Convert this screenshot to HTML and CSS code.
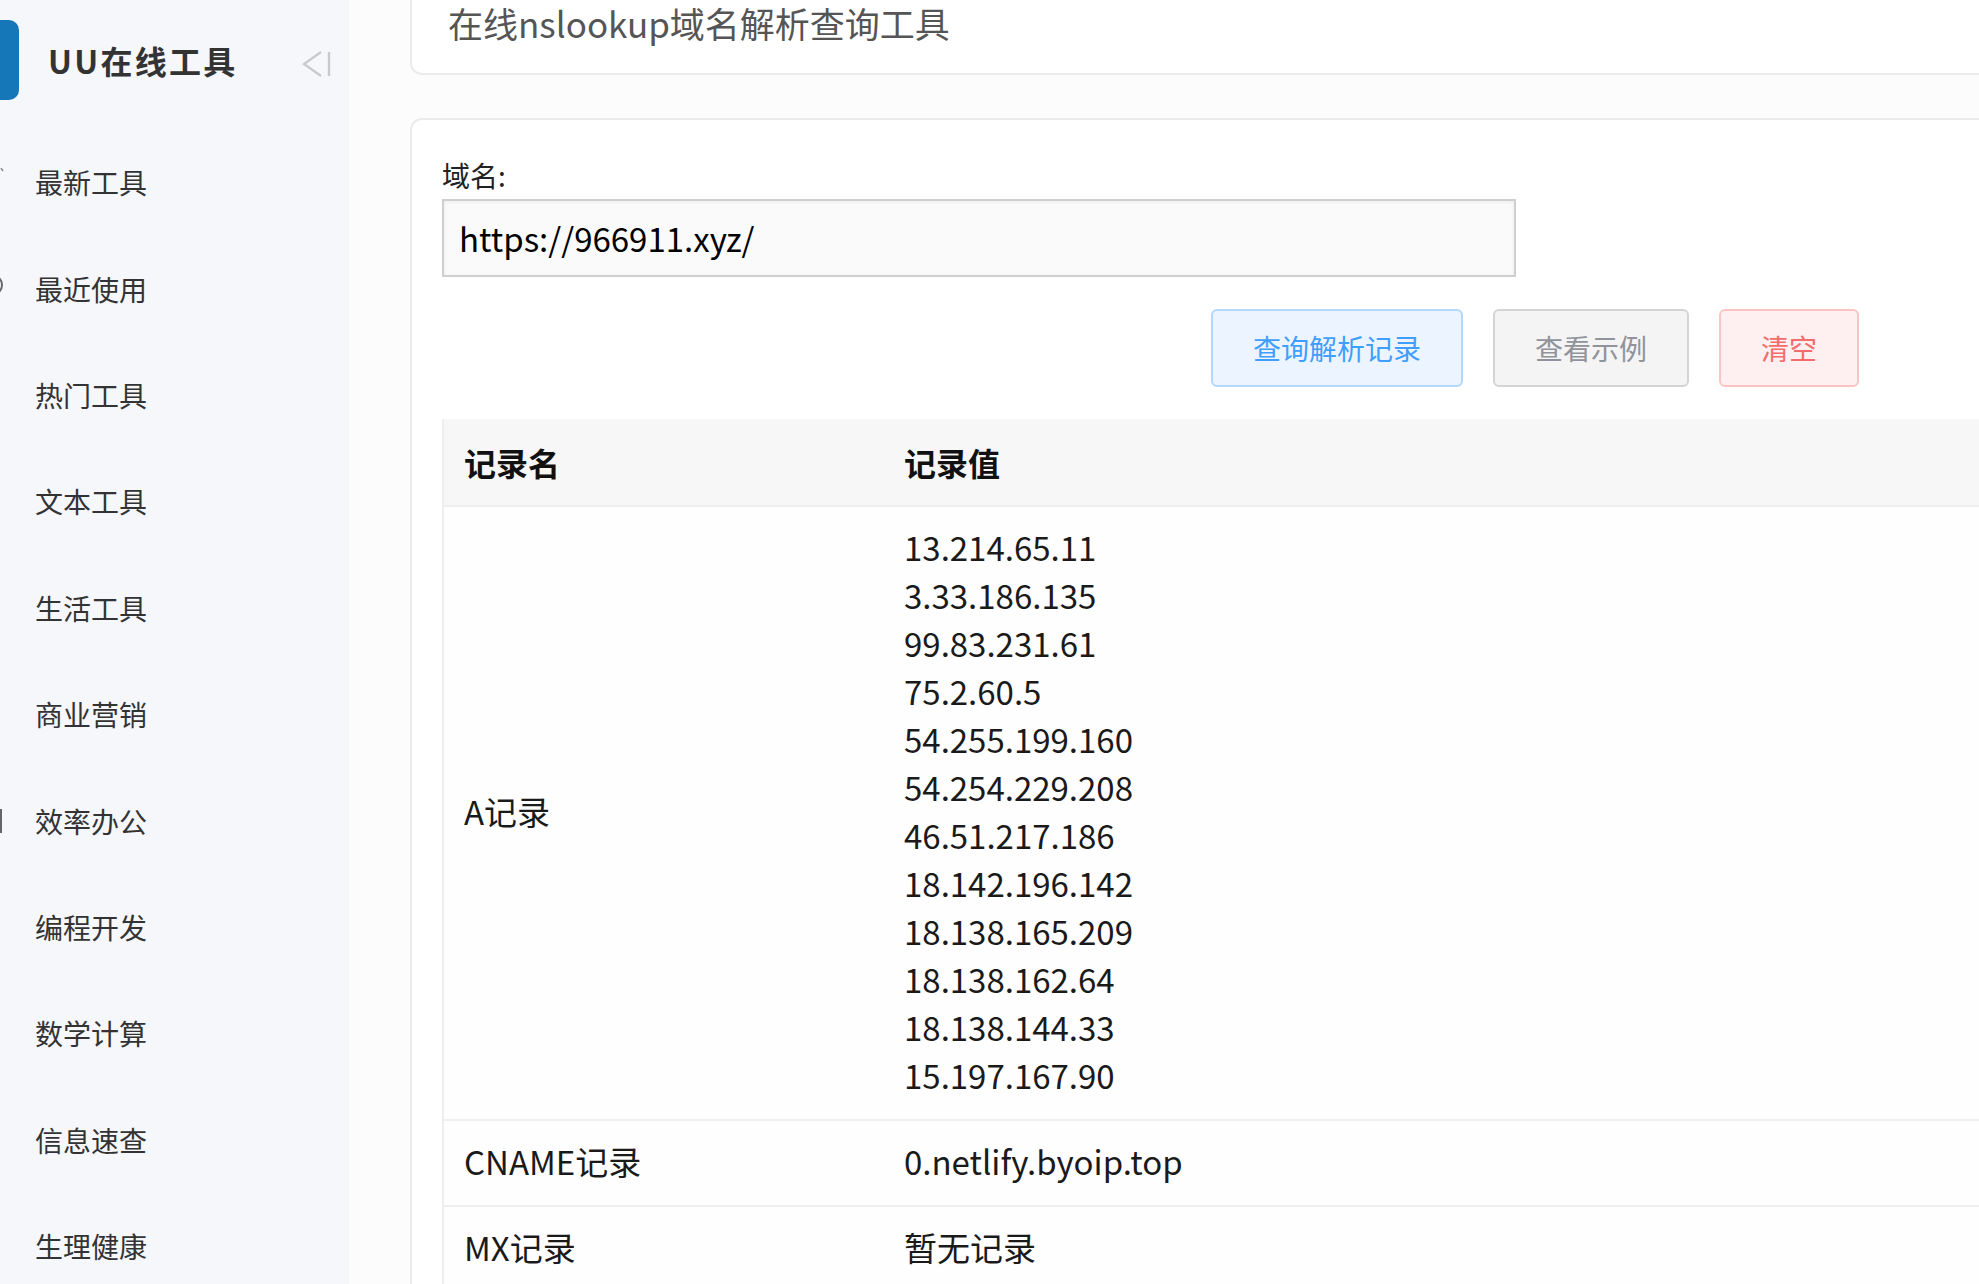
FILE: index.html
```html
<!DOCTYPE html>
<html lang="zh-CN">
<head>
<meta charset="utf-8">
<title>在线nslookup域名解析查询工具 - UU在线工具</title>
<link rel="stylesheet" href="styles.css">
</head>
<body>
<div class="app">
  <aside class="sidebar">
    <div class="brand">
      <span class="brand-mark"></span>
      <span class="brand-name">UU在线工具</span>
      <svg class="collapse" width="30" height="26" viewBox="0 0 30 26" aria-hidden="true">
        <polyline points="19,1 2,13 19,25" fill="none" stroke="#c9c9c9" stroke-width="2.2"/>
        <line x1="27" y1="1" x2="27" y2="25" stroke="#c9c9c9" stroke-width="2.4"/>
      </svg>
    </div>
    <nav class="menu">
      <a class="menu-item"><svg class="ico" width="4" height="28" viewBox="20 0 4 28"><line x1="21" y1="0" x2="23" y2="3" stroke="#888" stroke-width="1.5"/></svg>最新工具</a>
      <a class="menu-item"><svg class="ico" width="4" height="28" viewBox="20 0 4 28"><circle cx="12" cy="10" r="10" fill="none" stroke="#666" stroke-width="2"/></svg>最近使用</a>
      <a class="menu-item"><span class="ico-empty"></span>热门工具</a>
      <a class="menu-item"><span class="ico-empty"></span>文本工具</a>
      <a class="menu-item"><span class="ico-empty"></span>生活工具</a>
      <a class="menu-item"><span class="ico-empty"></span>商业营销</a>
      <a class="menu-item"><svg class="ico" width="4" height="28" viewBox="20 0 4 28"><line x1="21" y1="2" x2="21" y2="26" stroke="#666" stroke-width="2"/></svg>效率办公</a>
      <a class="menu-item"><span class="ico-empty"></span>编程开发</a>
      <a class="menu-item"><span class="ico-empty"></span>数学计算</a>
      <a class="menu-item"><span class="ico-empty"></span>信息速查</a>
      <a class="menu-item"><span class="ico-empty"></span>生理健康</a>
    </nav>
  </aside>

  <main class="main">
    <section class="card title-card">
      <h1 class="page-title">在线nslookup域名解析查询工具</h1>
    </section>

    <section class="card tool-card">
      <label class="field-label" for="domain">域名:</label>
      <input class="field-input" id="domain" type="text" value="https://966911.xyz/">

      <div class="actions">
        <button class="btn btn-primary" type="button">查询解析记录</button>
        <button class="btn btn-info" type="button">查看示例</button>
        <button class="btn btn-danger" type="button">清空</button>
      </div>

      <table class="result">
        <thead>
          <tr><th class="col-name">记录名</th><th>记录值</th></tr>
        </thead>
        <tbody>
          <tr>
            <td class="col-name">A记录</td>
            <td>
              <div>13.214.65.11</div>
              <div>3.33.186.135</div>
              <div>99.83.231.61</div>
              <div>75.2.60.5</div>
              <div>54.255.199.160</div>
              <div>54.254.229.208</div>
              <div>46.51.217.186</div>
              <div>18.142.196.142</div>
              <div>18.138.165.209</div>
              <div>18.138.162.64</div>
              <div>18.138.144.33</div>
              <div>15.197.167.90</div>
            </td>
          </tr>
          <tr>
            <td class="col-name">CNAME记录</td>
            <td>0.netlify.byoip.top</td>
          </tr>
          <tr>
            <td class="col-name">MX记录</td>
            <td>暂无记录</td>
          </tr>
        </tbody>
      </table>
    </section>
  </main>
</div>
</body>
</html>
```

FILE: styles.css
```css
* { box-sizing: border-box; }

html, body {
  margin: 0;
  padding: 0;
  height: 100%;
  overflow: hidden;
}

body {
  font-family: "Noto Sans CJK SC", "Noto Sans", sans-serif;
  color: #333;
  background: #fcfcfc;
}

.app {
  display: flex;
  height: 1284px;
  overflow: hidden;
}

/* ---------- sidebar ---------- */
.sidebar {
  flex: 0 0 349px;
  width: 349px;
  background: #f5f7fb;
  display: flex;
  flex-direction: column;
}

.brand {
  display: flex;
  align-items: center;
  height: 80px;
  margin-top: 20px;
  margin-bottom: 29px;
  padding-right: 17px;
}

.brand-mark {
  width: 19px;
  height: 80px;
  background: #1677b8;
  border-radius: 0 10px 10px 0;
}

.brand-name {
  margin-left: 29px;
  font-size: 32px;
  font-weight: 700;
  letter-spacing: 2.3px;
  color: #333;
  line-height: 40px;
}

.collapse {
  margin-left: auto;
  margin-top: 8px;
}

.menu {
  display: flex;
  flex-direction: column;
}

.menu-item {
  display: flex;
  align-items: center;
  height: 106.4px;
  font-size: 28px;
  line-height: 36px;
  color: #333;
  text-decoration: none;
}

.ico,
.ico-empty {
  flex: 0 0 4px;
  width: 4px;
  height: 28px;
  margin-right: 31px;
}

/* ---------- main ---------- */
.main {
  flex: 1 1 auto;
  min-width: 0;
  padding-left: 61px;
  overflow: hidden;
  background: #fcfcfc;
}

.card {
  background: #fff;
  border: 2px solid #ebebeb;
  border-radius: 12px;
  margin-right: -900px;
}

.title-card {
  margin-top: -20px;
  padding: 20px 36px 29px;
}

.page-title {
  margin: 0;
  font-size: 35px;
  line-height: 42px;
  font-weight: 400;
  color: #555;
}

.tool-card {
  margin-top: 43px;
  padding: 35px 30px 40px;
}

.field-label {
  display: block;
  font-size: 28px;
  line-height: 40px;
  color: #222;
  margin-bottom: 4px;
}

.field-input {
  display: block;
  width: 1074px;
  height: 78px;
  padding: 0 15px;
  border: 2px solid #cfcfcf;
  background: #fafafa;
  box-shadow: inset 0 1px 4px rgba(0, 0, 0, 0.06);
  font-family: inherit;
  font-size: 33px;
  color: #000;
  outline: none;
}

.actions {
  display: flex;
  justify-content: flex-end;
  gap: 30px;
  width: 1417px;
  margin-top: 32px;
}

.btn {
  height: 78px;
  padding: 0 40px;
  border: 2px solid;
  border-radius: 6px;
  font-family: inherit;
  font-size: 28px;
  line-height: 1;
  cursor: pointer;
}

.btn-primary {
  background: #ecf5ff;
  border-color: #b3d8ff;
  color: #409eff;
}

.btn-info {
  background: #f4f4f5;
  border-color: #d3d4d6;
  color: #909399;
}

.btn-danger {
  background: #fef0f0;
  border-color: #fbc4c4;
  color: #f56c6c;
}

.result {
  margin-top: 32px;
  width: 1800px;
  border-collapse: collapse;
  border-left: 2px solid #eeeeee;
  font-size: 33px;
  color: #1a1a1a;
}

.result th {
  height: 87px;
  padding: 0 20px;
  background: #f7f7f7;
  border-bottom: 2px solid #eeeeee;
  text-align: left;
  font-size: 32px;
  font-weight: 700;
  color: #111;
}

.result .col-name {
  width: 441px;
}

.result td {
  padding: 16px 20px 20px;
  line-height: 48px;
  vertical-align: middle;
  border-bottom: 2px solid #efefef;
  background: #fefefe;
}
```
